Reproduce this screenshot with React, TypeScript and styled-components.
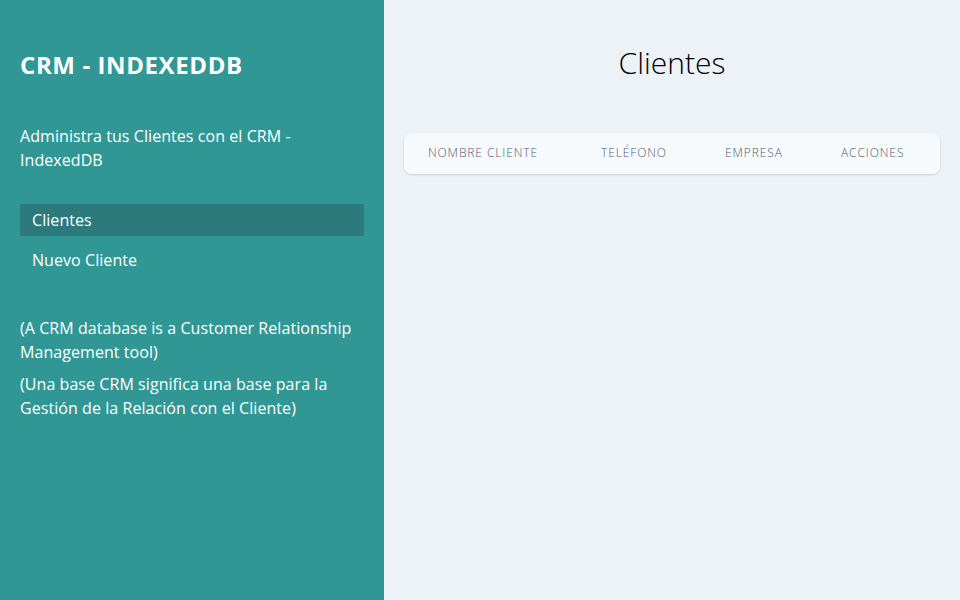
import React from "react";
import styled, { createGlobalStyle } from "styled-components";

const Global = createGlobalStyle`
  * { box-sizing: border-box; }
  body { margin: 0; font-family: "Open Sans", "Noto Sans", sans-serif; }
`;

const Layout = styled.div`
  display: flex;
  min-height: 600px;
`;

const Sidebar = styled.aside`
  width: 384px;
  flex-shrink: 0;
  background: #319795;
  color: #fff;
  padding: 49px 20px 20px;
`;

const Brand = styled.h2`
  margin: 0;
  font-size: 24px;
  line-height: 32px;
  font-weight: 700;
  letter-spacing: 0.025em;
  text-transform: uppercase;
`;

const Lead = styled.p`
  margin: 43px 0 0;
  font-size: 16px;
  line-height: 24px;
  letter-spacing: 0.004em;
`;

const Nav = styled.nav`
  margin-top: 32px;
  display: flex;
  flex-direction: column;
  gap: 8px;
`;

const NavLink = styled.a<{ $active?: boolean }>`
  display: block;
  padding: 4px 12px;
  font-size: 16px;
  line-height: 24px;
  letter-spacing: 0.004em;
  color: #fff;
  text-decoration: none;
  background: ${(p) => (p.$active ? "#2c7a7b" : "transparent")};
`;

const Notes = styled.div`
  margin-top: 40px;
  display: flex;
  flex-direction: column;
  gap: 8px;
`;

const Note = styled.p`
  margin: 0;
  font-size: 16px;
  line-height: 24px;
  letter-spacing: 0.004em;
`;

const Main = styled.main`
  flex: 1;
  background: #edf2f7;
  padding: 45px 20px 20px;
`;

const Title = styled.h2`
  margin: 0;
  text-align: center;
  font-size: 30px;
  line-height: 36px;
  font-weight: 300;
  color: #000;
`;

const Card = styled.div`
  margin-top: 52px;
  background: #f7fafc;
  border-radius: 8px;
  box-shadow: 0 1px 3px rgba(0, 0, 0, 0.1), 0 1px 2px rgba(0, 0, 0, 0.06);
  overflow: hidden;
`;

const Table = styled.table`
  width: 100%;
  border-collapse: collapse;
`;

const Th = styled.th<{ $w: number }>`
  width: ${(p) => p.$w}px;
  padding: 11px 24px 13px;
  text-align: left;
  font-size: 12px;
  line-height: 17px;
  font-weight: 300;
  letter-spacing: 0.075em;
  text-transform: uppercase;
  color: #4f5d75;
  white-space: nowrap;
  background: #f7fafc;
`;

export default function App() {
  return (
    <>
      <Global />
      <Layout>
        <Sidebar>
          <Brand>CRM - IndexedDB</Brand>
          <Lead>Administra tus Clientes con el CRM - IndexedDB</Lead>
          <Nav>
            <NavLink href="#" $active>Clientes</NavLink>
            <NavLink href="#">Nuevo Cliente</NavLink>
          </Nav>
          <Notes>
            <Note>(A CRM database is a Customer Relationship Management tool)</Note>
            <Note>(Una base CRM significa una base para la Gestión de la Relación con el Cliente)</Note>
          </Notes>
        </Sidebar>
        <Main>
          <Title>Clientes</Title>
          <Card>
            <Table>
              <thead>
                <tr>
                  <Th $w={173}>Nombre Cliente</Th>
                  <Th $w={124}>Teléfono</Th>
                  <Th $w={116}>Empresa</Th>
                  <Th $w={123}>Acciones</Th>
                </tr>
              </thead>
              <tbody></tbody>
            </Table>
          </Card>
        </Main>
      </Layout>
    </>
  );
}
